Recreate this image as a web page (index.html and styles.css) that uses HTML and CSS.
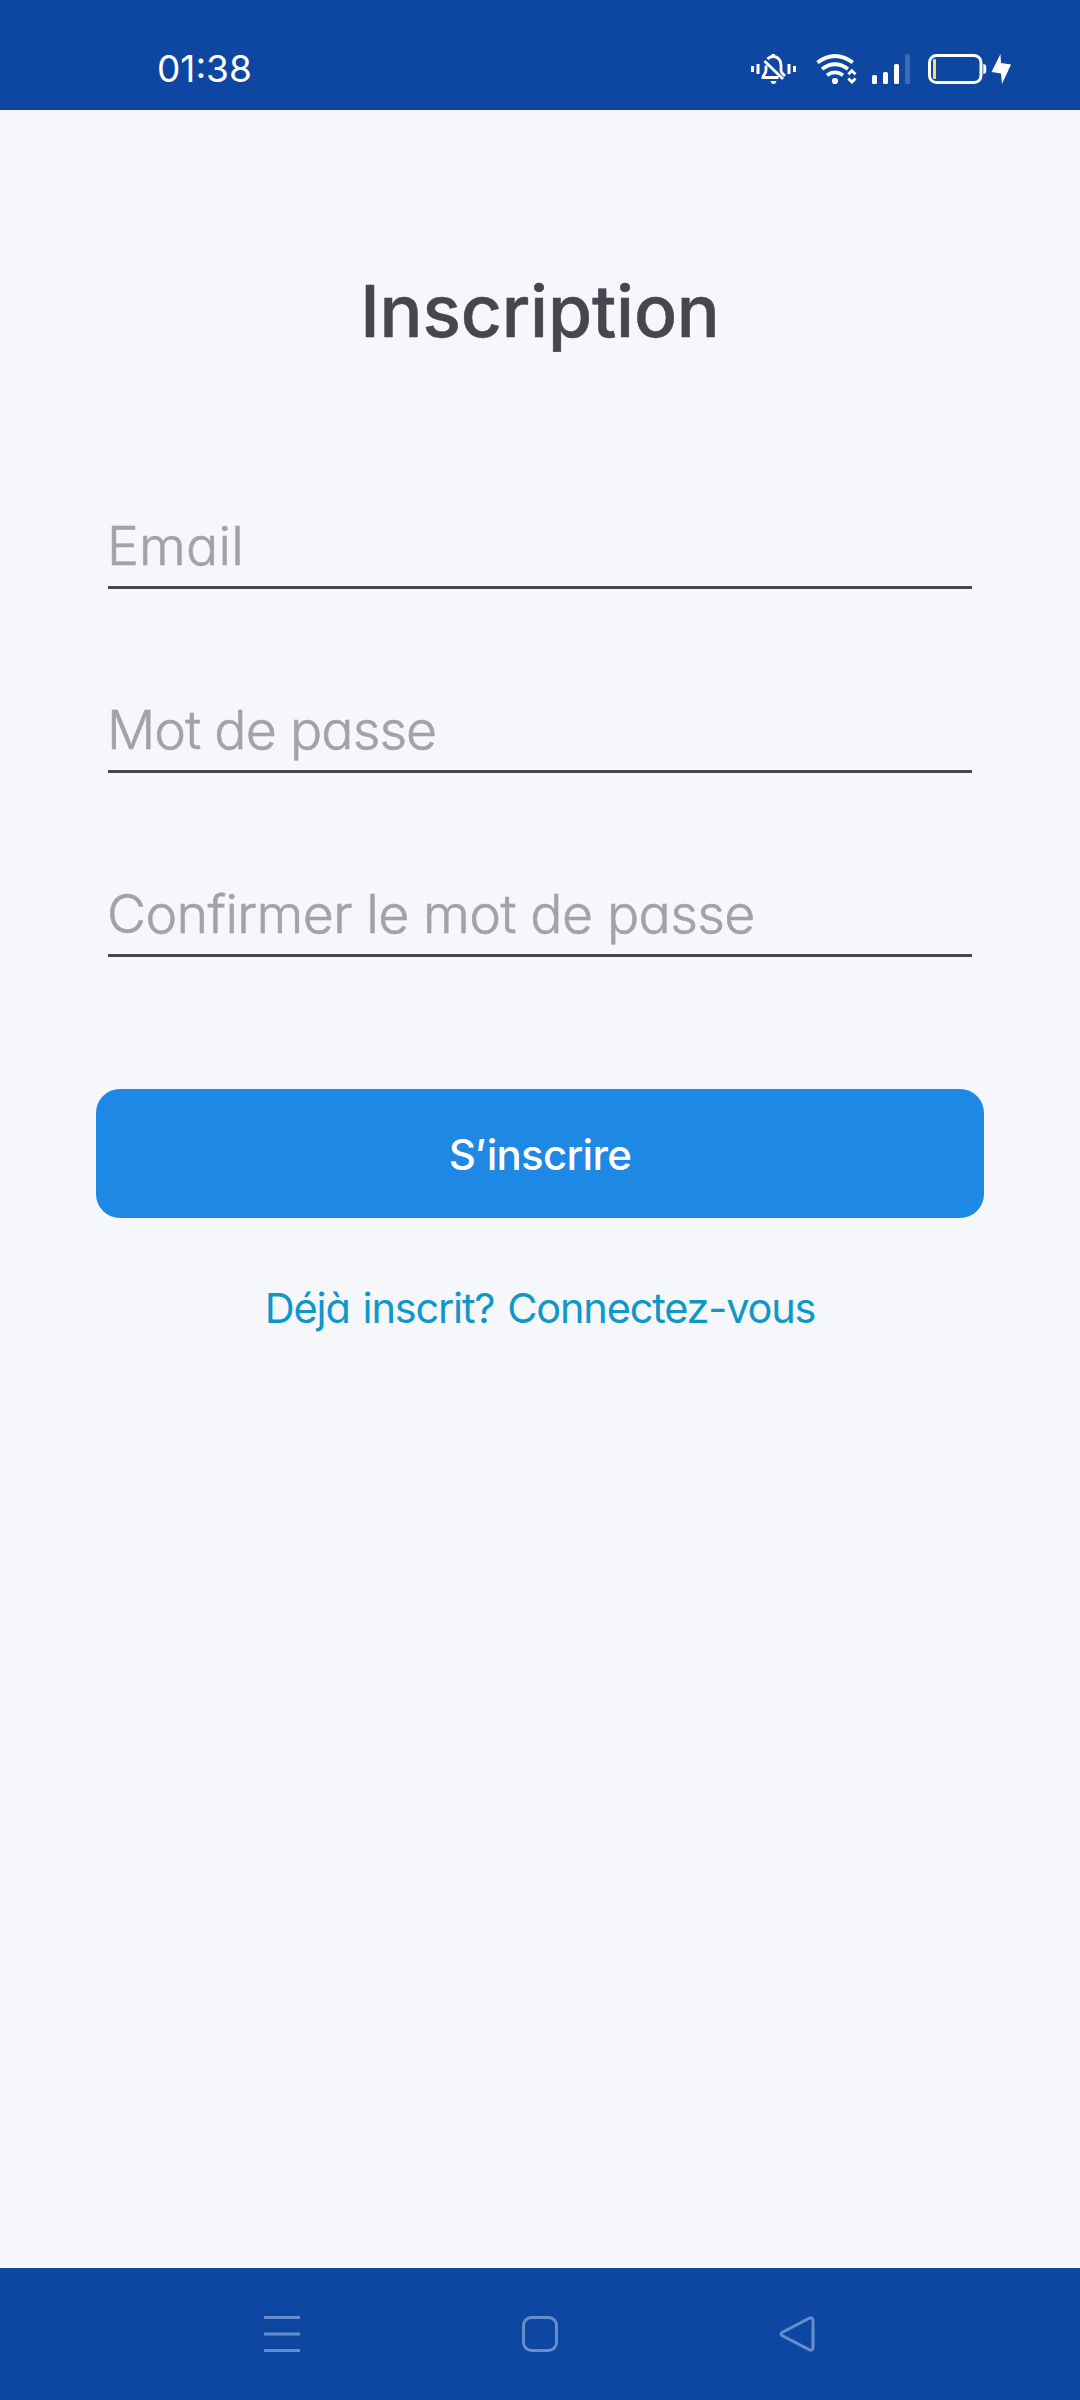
FILE: index.html
```
<!DOCTYPE html>
<html lang="fr">
<head>
<meta charset="utf-8">
<title>Inscription</title>
<link rel="stylesheet" href="styles.css">
</head>
<body>
<header class="status">
  <span class="time">01:38</span>
  <div class="status-icons">
    <svg class="bell" width="46" height="32" viewBox="750 53 46 32" fill="none" stroke="#fff" stroke-width="3">
      <path d="M752.500 66v6M758 64v10M789 64v10M794.500 66v6"/>
      <path d="M767.500 59c1.500-1.600 3.500-2.500 5.500-2.500 5 0 8 3.800 8 8.500v5.500c0 2 2 3.500 4 5.500M766 65.500v5c0 3-3 4-3 7h15.500M764.500 61l18.500 18" stroke-width="2.800"/>
      <path d="M771.500 55h3.500" stroke-width="2"/>
      <path d="M770.500 81h6c-.5 2-1.500 3-3 3s-2.500-1-3-3z" fill="#fff" stroke="none"/>
    </svg>
    <svg class="wifi" width="42" height="32" viewBox="815 53 42 32" fill="none" stroke="#fff" stroke-width="3.800">
      <path d="M817.500 62.500Q835 49.500 852.800 62.500M822 69Q835 59.500 848 69M827 75.300Q835 69.500 843 75.300"/>
      <circle cx="835" cy="81" r="3.100" fill="#fff" stroke="none"/>
      <path d="M848.300 74.200l3.600-3.400 3.600 3.400M848.300 78.500l3.600 3.600 3.600-3.600" stroke-width="2.800"/>
    </svg>
    <svg class="signal" width="38" height="32" viewBox="872 53 38 32" fill="#fff">
      <rect x="872" y="75" width="5" height="9" rx="1.500"/>
      <rect x="883" y="72" width="5" height="12" rx="1.500"/>
      <rect x="894" y="64" width="5" height="20" rx="1.500"/>
      <rect x="905" y="54" width="5" height="30" rx="1.500" opacity=".2"/>
    </svg>
    <svg class="battery" width="84" height="32" viewBox="928 53 84 32">
      <rect x="929.500" y="55.500" width="51.500" height="27" rx="7" fill="none" stroke="#fff" stroke-width="3"/>
      <rect x="933" y="59" width="3" height="20" rx="1" fill="#f5dc85"/>
      <path d="M983.300 64c3 .5 3 1.500 3 5s0 4.500-3 5z" fill="#fff"/>
      <path d="M1000.500 54l-9 18 9.500 1.500 1 10.500 9-19.500-10-1.500z" fill="#fff"/>
    </svg>
  </div>
</header>
<main class="form">
  <h1 class="title">Inscription</h1>
  <div class="fields">
    <div class="field field-email">Email</div>
    <div class="field field-password">Mot de passe</div>
    <div class="field">Confirmer le mot de passe</div>
  </div>
  <button class="submit" type="button">S<i>'</i>inscrire</button>
  <a class="login">Déjà inscrit? Connectez-vous</a>
</main>
<nav class="navbar">
  <svg width="42" height="42" viewBox="0 0 42 42"><path d="M3 4.500h36M3 21h36M3 37.500h36"/></svg>
  <svg width="42" height="42" viewBox="0 0 42 42"><rect x="4.500" y="4.500" width="33" height="33" rx="8"/></svg>
  <svg width="42" height="42" viewBox="0 0 42 42"><path d="M5 19.500L32.500 5.200Q36 4 36 7.500V34.500Q36 38 32.500 36.800L5 22.500Q3 21 5 19.500Z"/></svg>
</nav>
</body>
</html>
```
FILE: styles.css
```
* { box-sizing: border-box; }

body {
  margin: 0;
  height: 2400px;
  display: flex;
  flex-direction: column;
  background: #f5f7fb;
  color: #49454f;
  font-family: Inter, "Noto Sans", sans-serif;
  font-feature-settings: "cv11";
}

.status {
  height: 110px;
  padding: 28px 68px 0 157px;
  display: flex;
  justify-content: space-between;
  align-items: flex-start;
  background: #0d47a1;
  color: #fff;
}

.time {
  padding-top: 18px;
  font-size: 37px;
  line-height: 45px;
}

.status-icons {
  display: flex;
  padding-top: 25px;
}

.status-icons svg { display: block; }
.wifi { margin-left: 19px; }
.signal { margin-left: 15px; }
.battery { margin-left: 18px; }

.form {
  flex: 1;
  display: flex;
  flex-direction: column;
  padding: 165px 96px 0;
}

.title {
  margin: 0;
  font-size: 71.5px;
  font-weight: 500;
  line-height: 72px;
  letter-spacing: -0.2px;
  text-align: center;
  -webkit-text-stroke: 0.5px #49454f;
}

.fields {
  display: flex;
  flex-direction: column;
  gap: 100px;
  margin: 158px 12px 0;
}

.field {
  height: 84px;
  border-bottom: 3px solid #49454f;
  color: #a3a2a7;
  font-size: 53.6px;
  font-weight: 300;
  line-height: 81px;
  letter-spacing: -0.6px;
  text-indent: -1px;
  -webkit-text-stroke: 0.6px #a3a2a7;
}

.field-email { letter-spacing: 0.2px; }
.field-password { letter-spacing: -0.93px; }

.submit {
  height: 129px;
  margin-top: 132px;
  padding: 2px 0 0;
  border: 0;
  border-radius: 24px;
  background: #1e88e5;
  color: #fff;
  font: 500 42px Inter, "Noto Sans", sans-serif;
  letter-spacing: -0.7px;
}

.submit i {
  margin: 0 2px 0 -3px;
}

.login {
  margin-top: 65px;
  color: #0f97c7;
  font-size: 41.5px;
  line-height: 50px;
  letter-spacing: -1.2px;
  word-spacing: 2.5px;
  text-align: center;
}

.navbar {
  height: 132px;
  display: flex;
  justify-content: center;
  align-items: center;
  gap: 216px;
  background: #0d47a1;
}

.navbar svg {
  fill: none;
  stroke: #668dcd;
  stroke-width: 3;
}
```
